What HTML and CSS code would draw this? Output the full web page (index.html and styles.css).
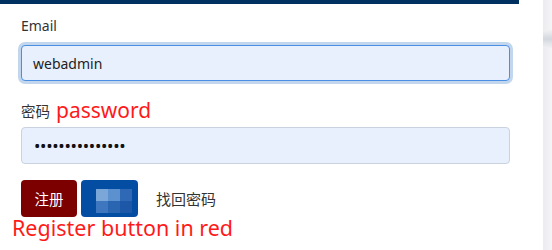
FILE: index.html
```html
<!DOCTYPE html>
<html>
<head>
<meta charset="utf-8">
<link rel="stylesheet" href="styles.css">
</head>
<body>
<div class="page">
  <div class="panel">
    <div class="topbar"></div>
    <form class="form">
      <label class="label">Email</label>
      <div class="input focused">webadmin</div>
      <div class="label pw-label"><span class="cjk">密码</span><span class="note big">password</span></div>
      <div class="input pw">•••••••••••••••</div>
      <div class="actions">
        <button type="button" class="btn btn-red">注册</button>
        <button type="button" class="btn btn-blue"><span class="mosaic"><i class="m1"></i><i class="m2"></i><i class="m3"></i><i class="m4"></i><i class="m5"></i><i class="m6"></i></span></button>
        <a class="link">找回密码</a>
      </div>
      <div class="note bottom-note">Register button in red</div>
    </form>
  </div>
  <div class="side"></div>
</div>
</body>
</html>
```
FILE: styles.css
```css
html, body { margin: 0; padding: 0; background: #fff; }
body { font-family: "Noto Sans", "Noto Sans CJK SC", sans-serif; color: #333; width: 552px; height: 250px; overflow: hidden; }
.page { display: flex; height: 250px; }
.panel { width: 519px; flex: none; }
.topbar { height: 4px; background: #00305f; }
.side { margin-left: 24px; flex: 1; background: linear-gradient(to right, #ececf0, #f4f4f7); position: relative; }
.side::before { content: ""; position: absolute; left: 0; right: 0; top: 30px; height: 18px; background: linear-gradient(to bottom, #f0f0f3, #d3d8de, #f0f0f3); }
.form { padding: 12px 0 0 21px; width: 489px; display: flex; flex-direction: column; }
.label { font-size: 14px; line-height: 20px; height: 20px; color: #333; }
.cjk { font-size: 14.5px; }
.input { box-sizing: border-box; height: 37px; margin-top: 7px; border: 1px solid #c9d2de; border-radius: 4px; background: #e8f0fe; font-size: 14px; line-height: 35px; padding-left: 11px; color: #222; }
.input.focused { border-color: #4a8fe4; box-shadow: 0 0 0 3px #c2d6ee; height: 36px; margin-top: 9px; }
.pw-label { margin-top: 18px; display: flex; align-items: flex-end; height: 22px; }
.note { color: #ff1a1a; font-family: "Noto Sans", sans-serif; }
.big { font-size: 21px; line-height: 22px; margin-left: 6px; }
.input.pw { margin-top: 6px; font-size: 17px; letter-spacing: -0.3px; color: #111; padding-left: 12px; }
.actions { display: flex; align-items: center; margin-top: 16px; height: 37px; }
.btn { height: 37px; border: none; border-radius: 4px; padding: 0; font-family: inherit; font-size: 14.5px; color: #fff; }
.btn-red { width: 56px; background: #7c0000; }
.btn-blue { width: 57px; margin-left: 4px; background: #034ea2; position: relative; }
.mosaic { position: absolute; left: 15px; top: 9px; width: 36px; height: 24px; display: grid; grid-template-columns: 12px 12px 12px; grid-template-rows: 12px 12px; }
.mosaic i { display: block; }
.m1 { background: #7ba7d8; }
.m2 { background: #5c91cf; }
.m3 { background: #2f69b6; }
.m4 { background: #3e76c0; }
.m5 { background: #2a65b2; }
.m6 { background: #1d58a8; }
.link { margin-left: 18px; font-size: 15px; color: #333; }
.bottom-note { margin-left: -9px; font-size: 21.5px; line-height: 22px; margin-top: 0; }
```
